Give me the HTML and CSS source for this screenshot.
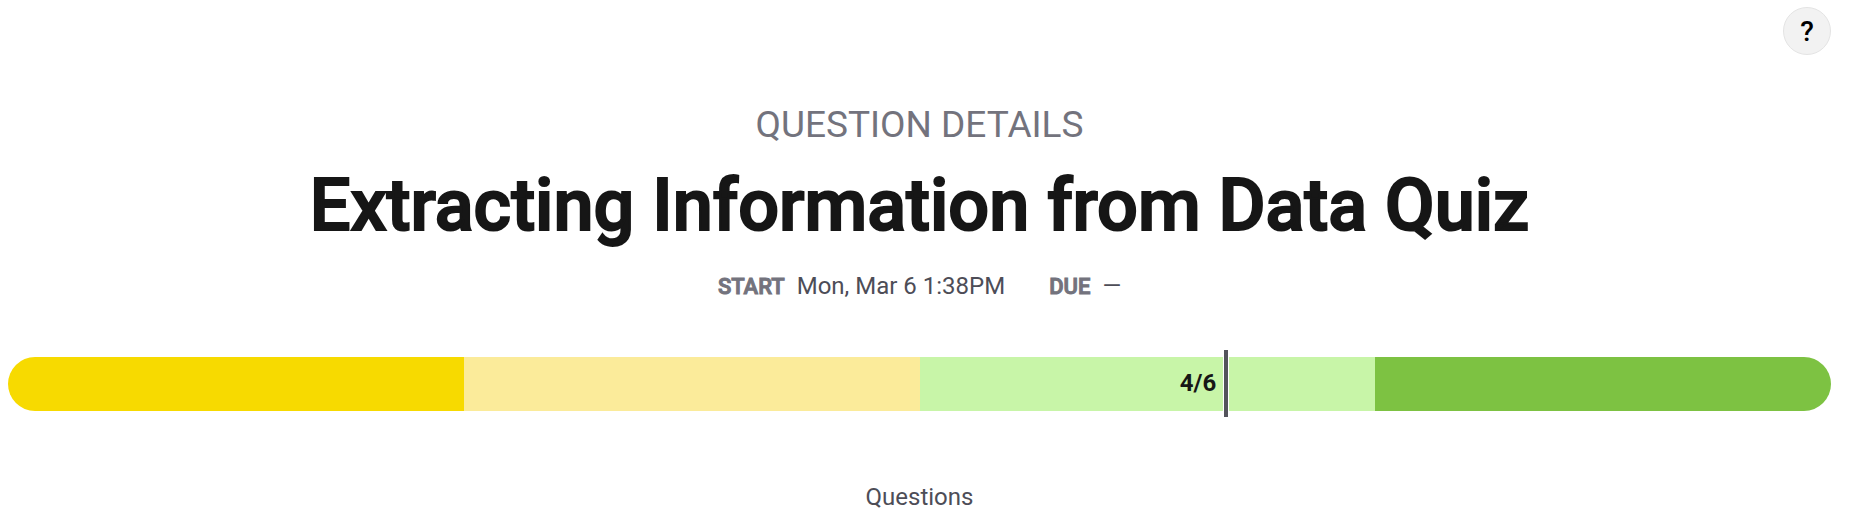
FILE: index.html
```html
<!DOCTYPE html>
<html lang="en">
<head>
<meta charset="utf-8">
<meta name="viewport" content="width=device-width, initial-scale=1">
<title>Question Details</title>
<link rel="stylesheet" href="styles.css">
</head>
<body>
<main class="page">
  <div class="toolbar">
    <button class="help" type="button" aria-label="Help">?</button>
  </div>
  <header class="heading">
    <p class="eyebrow">QUESTION DETAILS</p>
    <h1 class="title">Extracting Information from Data Quiz</h1>
    <dl class="dates">
      <div class="date"><dt>START</dt><dd>Mon, Mar 6 1:38PM</dd></div>
      <div class="date"><dt>DUE</dt><dd>—</dd></div>
    </dl>
  </header>
  <section class="score">
    <div class="band band-low"></div>
    <div class="band band-fair"></div>
    <div class="band band-good"></div>
    <div class="band band-high"></div>
    <div class="marker" style="width: 66.72%"><span class="marker-label">4/6</span></div>
  </section>
  <h2 class="subtitle">Questions</h2>
</main>
</body>
</html>
```

FILE: styles.css
```css
* { box-sizing: border-box; }

body {
  margin: 0;
  background: #fff;
  color: #161616;
  font-family: Roboto, "Liberation Sans", sans-serif;
}

.page { padding: 7px 35px 0 8px; }

.toolbar { display: flex; justify-content: flex-end; }

.help {
  width: 48px;
  height: 48px;
  padding: 2px 0 0;
  border: 1px solid #e4e4e4;
  border-radius: 50%;
  background: #f2f2f2;
  color: #000;
  font: 500 28px/44px Roboto, sans-serif;
}

.heading { padding-top: 47px; text-align: center; }

.eyebrow {
  margin: 0;
  color: #73737d;
  font-size: 37px;
  line-height: 46px;
}

.title {
  margin: 13px 0 0;
  font-size: 72px;
  font-weight: 500;
  line-height: 90px;
  -webkit-text-stroke: 2px #161616;
}

.dates {
  display: flex;
  justify-content: center;
  gap: 44px;
  margin: 20px 0 0;
  line-height: 30px;
}

.date { display: flex; gap: 12px; align-items: baseline; }

.date dt {
  color: #73737d;
  font-size: 22px;
  font-weight: 500;
  -webkit-text-stroke: 1px #73737d;
}

.date dd { margin: 0; color: #4d4d57; font-size: 24px; }

.score {
  position: relative;
  display: flex;
  height: 54px;
  margin-top: 55px;
}

.band { flex: 1; }
.band-low { border-radius: 27px 0 0 27px; background: #f7da00; }
.band-fair { background: #fbeb9a; }
.band-good { background: #c8f5a8; }
.band-high { border-radius: 0 27px 27px 0; background: #7dc242; }

.marker {
  position: absolute;
  top: -7px;
  bottom: -6px;
  left: 0;
  display: flex;
  align-items: center;
  justify-content: flex-end;
  padding: 0 8px 2px 0;
}

.marker::after {
  content: "";
  position: absolute;
  top: 0;
  bottom: 0;
  left: 100%;
  width: 4px;
  background: #54545c;
  box-shadow: -1px 0 #fff, 1px 0 #fff;
}

.marker-label { font-size: 24px; font-weight: 700; }

.subtitle {
  margin: 71px 0 0;
  color: #4d4d57;
  font-size: 24px;
  font-weight: 400;
  line-height: 30px;
  text-align: center;
}
```
